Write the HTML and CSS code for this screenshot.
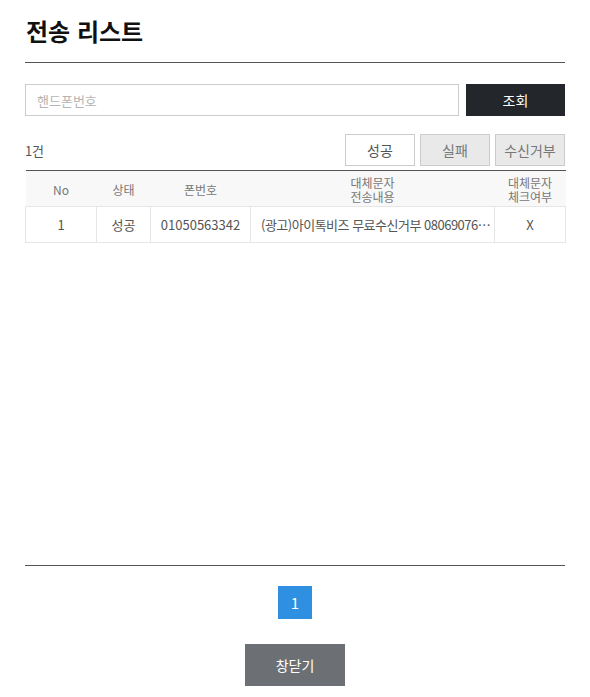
FILE: index.html
```html
<!DOCTYPE html>
<html lang="ko">
<head>
<meta charset="utf-8">
<title>전송 리스트</title>
<link rel="stylesheet" href="styles.css">
</head>
<body>
<div class="page">
  <h1 class="title">전송 리스트</h1>
  <div class="search">
    <input class="search-input" type="text" placeholder="핸드폰번호">
    <button class="btn-search">조회</button>
  </div>
  <div class="toolbar">
    <span class="count">1건</span>
    <div class="filters">
      <button class="filter active">성공</button>
      <button class="filter">실패</button>
      <button class="filter">수신거부</button>
    </div>
  </div>
  <table class="list">
    <colgroup>
      <col class="c-no"><col class="c-state"><col class="c-phone"><col class="c-msg"><col class="c-check">
    </colgroup>
    <thead>
      <tr>
        <th>No</th>
        <th>상태</th>
        <th>폰번호</th>
        <th><span class="hl">대체문자</span><span class="hl">전송내용</span></th>
        <th><span class="hl">대체문자</span><span class="hl">체크여부</span></th>
      </tr>
    </thead>
    <tbody>
      <tr>
        <td>1</td>
        <td>성공</td>
        <td>01050563342</td>
        <td class="msg"><div class="msg-text">(광고)아이톡비즈 무료수신거부 08069076…</div></td>
        <td>X</td>
      </tr>
    </tbody>
  </table>
  <div class="spacer"></div>
  <div class="footer">
    <div class="pager"><a class="page-num">1</a></div>
    <button class="btn-close">창닫기</button>
  </div>
</div>
</body>
</html>
```

FILE: styles.css
```css
* { box-sizing: border-box; }
html, body { margin: 0; padding: 0; background: #fff; }
body {
  font-family: "Noto Sans CJK KR", "Noto Sans", sans-serif;
  color: #333;
}
.page {
  height: 697px;
  padding: 0 25px 11px;
  display: flex;
  flex-direction: column;
}
.title {
  margin: 0;
  padding: 14px 0 14px 1px;
  font-size: 24px;
  line-height: 34px;
  font-weight: 700;
  color: #111;
  border-bottom: 1px solid #555;
}
.search {
  margin-top: 21px;
  display: flex;
  gap: 7px;
  height: 32px;
}
.search-input {
  flex: 1;
  height: 32px;
  border: 1px solid #ccc;
  padding: 0 11px;
  font-family: inherit;
  font-size: 13px;
  color: #333;
  outline: none;
}
.search-input::placeholder { color: #b5b5b5; }
.btn-search {
  width: 99px;
  height: 32px;
  border: 0;
  background: #23272b;
  color: #fff;
  font-family: inherit;
  font-size: 14px;
  line-height: 32px;
  padding: 0;
}
.toolbar {
  margin-top: 18px;
  display: flex;
  justify-content: space-between;
  align-items: center;
  height: 32px;
}
.count {
  font-size: 13px;
  color: #555;
  letter-spacing: -0.3px;
}
.filters {
  display: flex;
  gap: 5px;
}
.filter {
  width: 70px;
  height: 32px;
  border: 1px solid #ccc;
  background: #e9e9e9;
  color: #777;
  font-family: inherit;
  font-size: 14px;
  padding: 0;
}
.filter.active {
  background: #fff;
  color: #555;
}
.list {
  margin-top: 4px;
  width: 100%;
  border-collapse: collapse;
  table-layout: fixed;
  border-top: 1px solid #555;
  font-size: 13px;
}
.c-no { width: 71px; }
.c-state { width: 54px; }
.c-phone { width: 100px; }
.c-msg { width: 244px; }
.c-check { width: 71px; }
.list th {
  height: 36px;
  background: #f8f8f8;
  font-weight: 400;
  color: #777;
  font-size: 12px;
  line-height: 14px;
  text-align: center;
  padding: 2px 0 0;
  border-bottom: 1px solid #e6e6e6;
}
.hl {
  display: block;
  line-height: 14px;
}
.list td {
  height: 36px;
  text-align: center;
  color: #555;
  border: 1px solid #e6e6e6;
  border-top: 0;
  padding: 0 4px;
  white-space: nowrap;
}
.list td.msg { text-align: left; padding: 0 0 0 10px; }
.msg-text {
  overflow: hidden;
  white-space: nowrap;
  letter-spacing: -0.5px;
}
.spacer { flex: 1; }
.footer {
  border-top: 1px solid #555;
  display: flex;
  flex-direction: column;
  align-items: center;
}
.pager {
  margin-top: 20px;
  display: flex;
}
.page-num {
  display: block;
  width: 34px;
  height: 33px;
  line-height: 33px;
  text-align: center;
  background: #2f8fe0;
  color: #fff;
  font-size: 15px;
}
.btn-close {
  margin-top: 25px;
  width: 100px;
  height: 42px;
  border: 0;
  background: #6c7074;
  color: #fff;
  font-family: inherit;
  font-size: 14px;
  padding: 0;
}
```
